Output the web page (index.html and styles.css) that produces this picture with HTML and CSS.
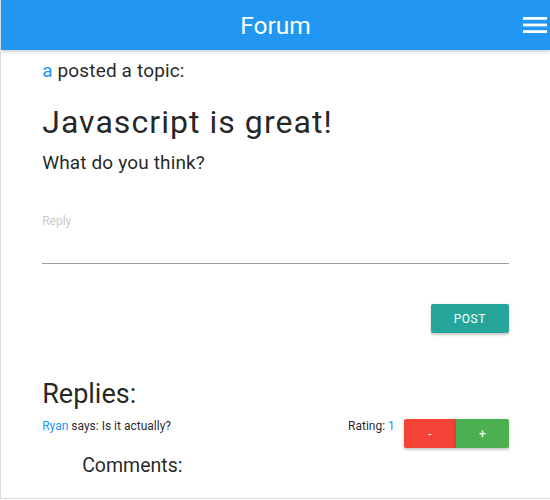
FILE: index.html
```html
<!DOCTYPE html>
<html>
<head>
<meta charset="utf-8">
<link rel="stylesheet" href="styles.css">
</head>
<body>
<div class="frame">
  <header class="nav">
    <span class="brand">Forum</span>
    <span class="menu">
      <svg width="24" height="18" viewBox="0 0 24 18"><rect x="0" y="1" width="24" height="2.8" fill="#fff"/><rect x="0" y="7.6" width="24" height="2.8" fill="#fff"/><rect x="0" y="14.2" width="24" height="2.8" fill="#fff"/></svg>
    </span>
  </header>
  <main class="container">
    <p class="poster"><a class="link">a</a> posted a topic:</p>
    <h1 class="title">Javascript is great!</h1>
    <p class="body">What do you think?</p>
    <div class="field">
      <label class="label">Reply</label>
      <div class="input"></div>
    </div>
    <div class="actions">
      <button class="btn teal">POST</button>
    </div>
    <h2 class="replies">Replies:</h2>
    <div class="reply">
      <span class="says"><a class="link">Ryan</a> says: Is it actually?</span>
      <span class="rating">Rating: <span class="link">1</span></span>
      <div class="votes">
        <button class="btn red">-</button>
        <button class="btn green">+</button>
      </div>
    </div>
    <h3 class="comments">Comments:</h3>
  </main>
</div>
</body>
</html>
```
FILE: styles.css
```css
* { box-sizing: border-box; }
html, body { margin: 0; padding: 0; background: #fff; }
body { font-family: Roboto, "Noto Sans", sans-serif; color: rgba(0,0,0,0.87); }
.frame {
  height: 499px;
  border-left: 1px solid #dcdcdc;
  border-bottom: 1px solid #dcdcdc;
  overflow: hidden;
}
.nav {
  height: 50px;
  background: #2196f3;
  box-shadow: 0 2px 3px rgba(0,0,0,0.18);
  display: flex;
  align-items: center;
  justify-content: center;
  position: relative;
}
.brand { color: #fff; font-size: 24.5px; }
.menu { position: absolute; right: 3px; top: 16px; display: flex; }
.container { width: 85%; margin: 0 auto; }
.link { color: #2196f3; }
.poster { margin: 0; padding-top: 7px; font-size: 19px; line-height: 27px; letter-spacing: 0.15px; }
.title { margin: 19px 0 0; font-weight: 400; font-size: 32px; line-height: 38px; letter-spacing: 1.05px; }
.body { margin: 10px 0 0; font-size: 19px; line-height: 24px; letter-spacing: 0.15px; }
.field { margin-top: 38px; }
.label { display: block; font-size: 12px; color: #c8c8c8; line-height: 16px; }
.input { height: 35px; border-bottom: 1px solid #9e9e9e; }
.actions { display: flex; justify-content: flex-end; margin-top: 40px; }
.btn {
  border: none; color: #fff; font-family: Roboto, sans-serif; font-size: 12px;
  border-radius: 2px; cursor: pointer; padding: 0;
  box-shadow: 0 2px 2px rgba(0,0,0,0.14), 0 1px 5px rgba(0,0,0,0.12);
}
.teal { background: #26a69a; width: 78px; height: 29px; letter-spacing: 0.5px; }
.replies { margin: 45px 0 0; font-weight: 400; font-size: 27px; line-height: 32px; }
.reply { display: flex; align-items: flex-start; margin-top: 9px; }
.says { font-size: 12px; line-height: 14px; flex: 1; }
.rating { font-size: 12px; line-height: 14px; margin-right: 9px; }
.votes { display: flex; }
.red { background: #f44336; width: 52px; height: 29px; border-radius: 2px 0 0 2px; }
.green { background: #4caf50; width: 53px; height: 29px; border-radius: 0 2px 2px 0; }
.comments { margin: 6px 0 0 40px; font-weight: 400; font-size: 19.5px; line-height: 24px; }
```
